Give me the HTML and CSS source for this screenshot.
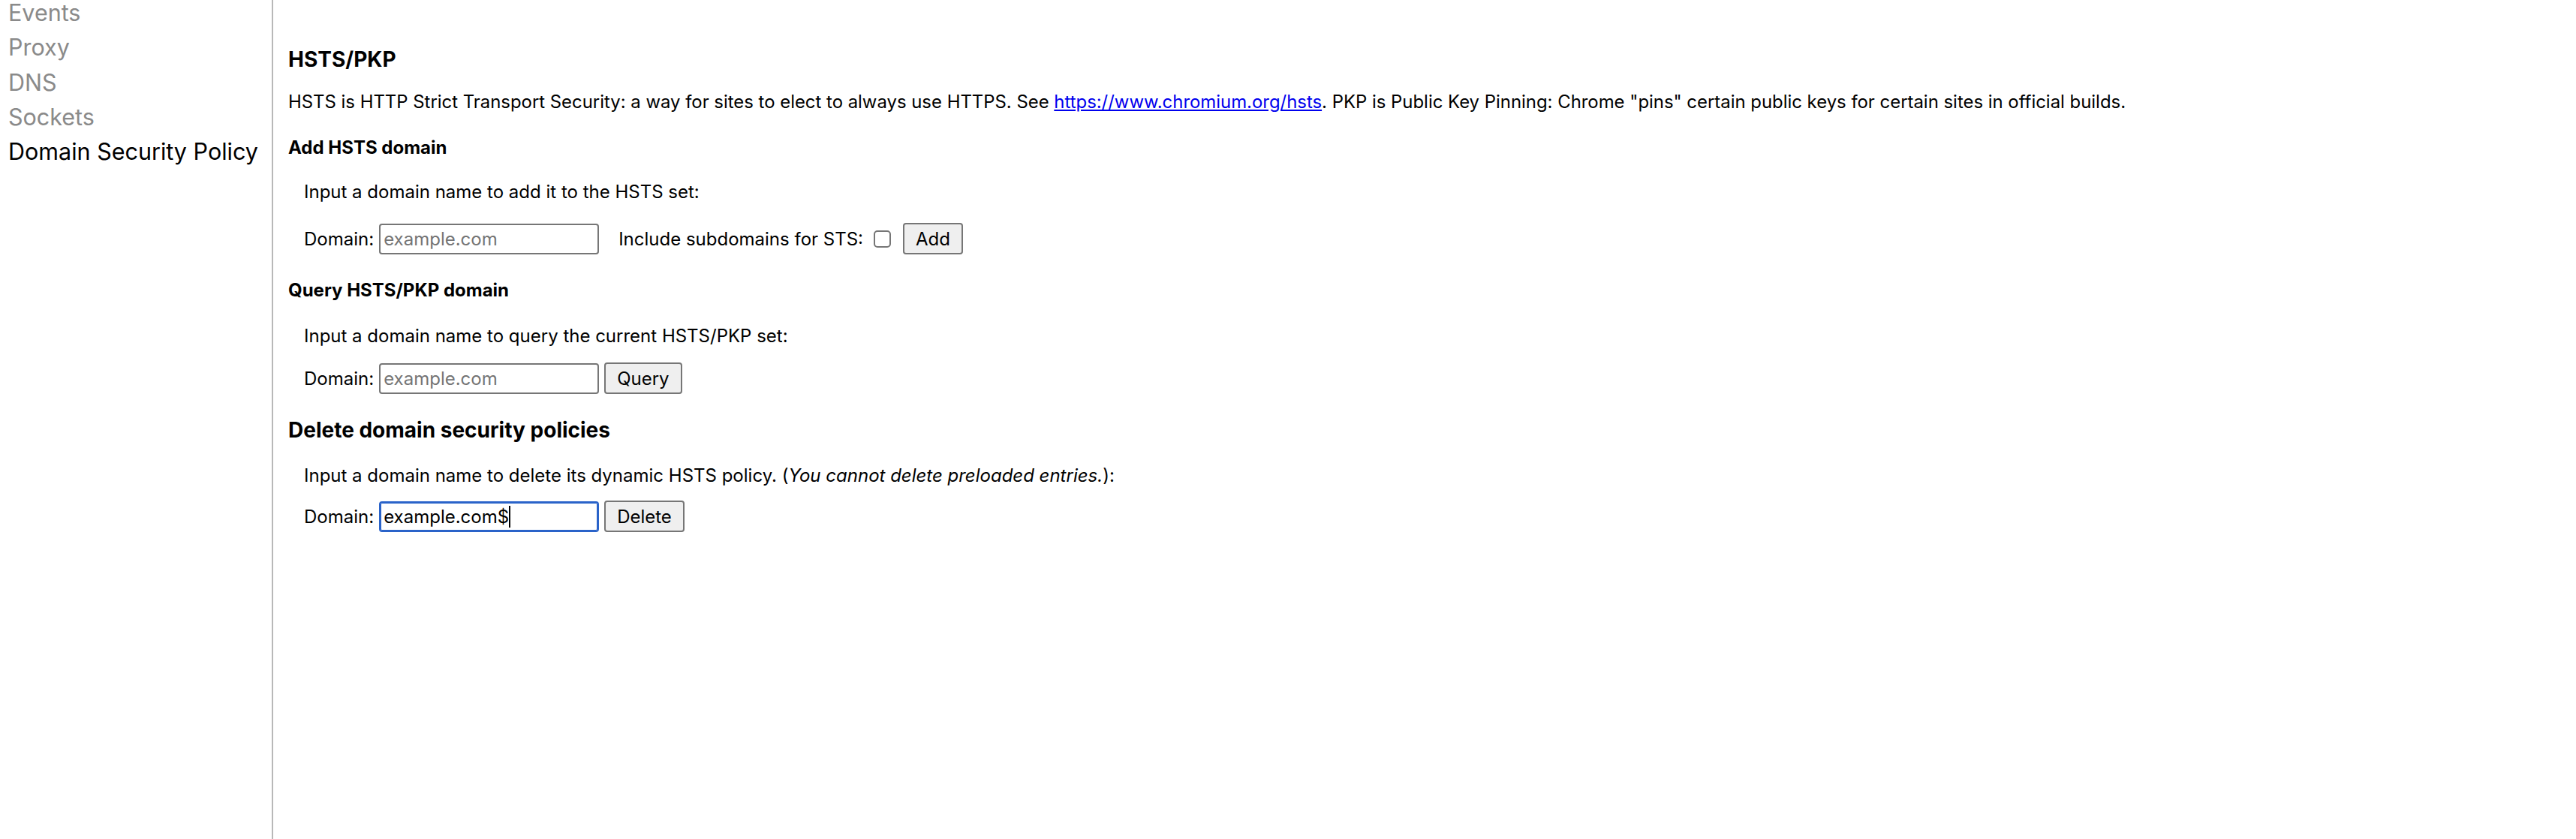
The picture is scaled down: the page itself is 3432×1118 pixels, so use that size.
FILE: index.html
```html
<!DOCTYPE html>
<html lang="en">
<head>
<meta charset="utf-8">
<title>net-internals</title>
<link rel="stylesheet" href="styles.css">
</head>
<body>
<div class="app">
  <nav class="sidebar">
    <ul class="tabs">
      <li class="tab">Events</li>
      <li class="tab">Proxy</li>
      <li class="tab">DNS</li>
      <li class="tab">Sockets</li>
      <li class="tab active">Domain Security Policy</li>
    </ul>
  </nav>
  <main class="content">
    <h3 class="page-title">HSTS/PKP</h3>
    <p class="intro">HSTS is HTTP Strict Transport Security: a way for sites to elect to always use HTTPS. See <a href="#">https://www.chromium.org/hsts</a>. PKP is Public Key Pinning: Chrome "pins" certain public keys for certain sites in official builds.</p>

    <h4 class="section-title first-section">Add HSTS domain</h4>
    <p class="desc desc-first">Input a domain name to add it to the HSTS set:</p>
    <div class="row row-first">
      <label class="field-label">Domain:</label>
      <input class="field" type="text" placeholder="example.com">
      <label class="sts-label">Include subdomains for STS:</label>
      <span class="check"></span>
      <button class="btn btn-add">Add</button>
    </div>

    <h4 class="section-title section-gap">Query HSTS/PKP domain</h4>
    <p class="desc">Input a domain name to query the current HSTS/PKP set:</p>
    <div class="row row-second">
      <label class="field-label">Domain:</label>
      <input class="field" type="text" placeholder="example.com">
      <button class="btn">Query</button>
    </div>

    <h3 class="section-title big section-gap2">Delete domain security policies</h3>
    <p class="desc">Input a domain name to delete its dynamic HSTS policy. (<i>You cannot delete preloaded entries.</i>):</p>
    <div class="row row-tight">
      <label class="field-label">Domain:</label>
      <span class="field-wrap">
        <input class="field focused" type="text" value="example.com$">
        <span class="caret-mirror">example.com$</span>
      </span>
      <button class="btn">Delete</button>
    </div>
  </main>
</div>
</body>
</html>
```

FILE: styles.css
```css
html, body {
  margin: 0;
  padding: 0;
  background: #ffffff;
}

body {
  font-family: Inter, "Noto Sans", "Liberation Sans", sans-serif;
  color: #000;
  overflow: hidden;
}

.app {
  display: flex;
  height: 1118px;
}

.sidebar {
  width: 362px;
  flex: none;
  border-right: 2px solid #b8b8b8;
  overflow: hidden;
}

.tabs {
  list-style: none;
  margin: 0;
  padding: 0 0 0 11px;
}

.tab {
  font-size: 30.5px;
  line-height: 34.5px;
  padding-bottom: 11.75px;
  color: #8a8a8a;
  white-space: nowrap;
}

.tab.active {
  color: #000;
}

.content {
  flex: 1;
  padding: 0 0 0 20px;
}

.page-title {
  font-size: 28px;
  font-weight: 700;
  line-height: 30px;
  margin: 64px 0 0 0;
}

.intro {
  font-size: 23.9px;
  line-height: 30px;
  margin: 27px 0 0 0;
  white-space: nowrap;
}

.intro a {
  color: #0000ee;
}

.section-title {
  font-size: 24px;
  font-weight: 700;
  line-height: 30px;
  margin: 29px 0 0 0;
}

.section-title.big {
  font-size: 28px;
}

.first-section {
  margin-top: 31px;
}

.section-gap {
  margin-top: 33px;
}

.section-gap2 {
  margin-top: 33px;
}

.desc {
  font-size: 24px;
  line-height: 30px;
  margin: 31px 0 0 21px;
}

.desc-first {
  margin-top: 29px;
}

.row {
  display: flex;
  align-items: center;
  height: 42px;
  margin: 24px 0 0 21px;
  font-size: 24px;
}

.row-first {
  margin-top: 26px;
}

.row-second {
  margin-top: 20px;
}

.row-tight {
  margin-top: 18px;
}

.field-label {
  margin-right: 7px;
}

.field {
  box-sizing: border-box;
  width: 293px;
  height: 41px;
  border: 2px solid #767676;
  border-radius: 4px;
  padding: 0 4px;
  font-family: inherit;
  font-size: 24px;
  color: #000;
  background: #fff;
  outline: none;
}

.field::placeholder {
  color: #757575;
}

.field.focused {
  border-color: #2a63c9;
  box-shadow: inset 0 0 0 1px #2a63c9;
}

.field-wrap {
  position: relative;
  display: inline-flex;
}

.caret-mirror {
  position: absolute;
  left: 6px;
  top: 6px;
  height: 29px;
  line-height: 29px;
  font-size: 24px;
  color: transparent;
  border-right: 2px solid #000;
  pointer-events: none;
  white-space: pre;
}

.sts-label {
  margin-left: 26px;
}

.check {
  box-sizing: border-box;
  width: 23px;
  height: 23px;
  border: 2px solid #767676;
  border-radius: 5px;
  margin: 0 16px 0 14px;
  background: #fff;
}

.btn {
  box-sizing: border-box;
  height: 42px;
  padding: 0 15px;
  margin-left: 7px;
  border: 2px solid #767676;
  border-radius: 4px;
  background: #efefef;
  font-family: inherit;
  font-size: 24px;
  color: #000;
}

.btn-add {
  margin-left: 0;
}
```
